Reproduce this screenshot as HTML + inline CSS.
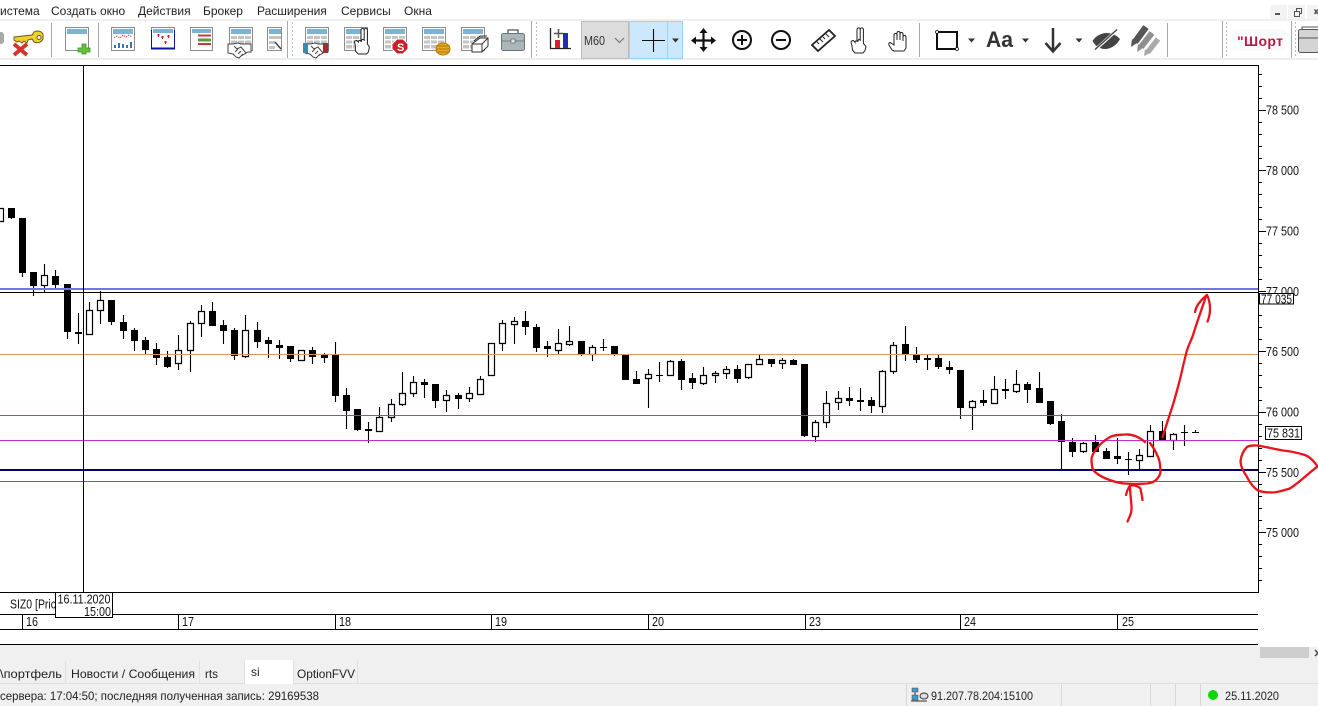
<!DOCTYPE html>
<html><head><meta charset="utf-8"><style>
html,body{margin:0;padding:0;width:1318px;height:706px;overflow:hidden;background:#fff}
svg{position:absolute;left:0;top:0;font-family:"Liberation Sans",sans-serif}
</style></head><body>
<svg width="1318" height="706" viewBox="0 0 1318 706" xmlns="http://www.w3.org/2000/svg">
<defs>
<g id="tb"><rect x=".5" y=".5" width="23" height="23" fill="#fff" stroke="#8c8c8c"/><rect x="2" y="2" width="20" height="5" fill="#7fb3d1"/><path d="M2 9h20v3H2zM2 13.500h20v3H2zM2 18h20v3.500H2z" fill="#c4c4c4"/><path d="M8.500 8v14M15.500 8v14" stroke="#fff"/></g>
<g id="win"><rect x=".5" y=".5" width="23" height="23" fill="#fff" stroke="#8c8c8c"/><rect x="2" y="2" width="20" height="5" fill="#7fb3d1"/></g>
<g id="hs"><path d="M1 2h5l5-1 3 1 3 0 7 0v8h-3l-7 4-2 2-3-1-3-3-5-1z" fill="#fff" stroke="#444"/><path d="M7 4l3 3 4-2 5 6M8 10l3-3M11 12l3-3M14 14l2-2" fill="none" stroke="#444"/></g>
<path id="ar" d="M0 0h7l-3.500 4z" fill="#333"/>
</defs>
<!-- top chrome -->
<rect x="0" y="19" width="1318" height="2" fill="#f0f0f0"/>
<rect x="0" y="58" width="1318" height="2" fill="#eee"/>
<g font-size="12" fill="#222">
<text x="0" y="15">истема</text><text x="51" y="15">Создать окно</text><text x="138" y="15">Действия</text><text x="203" y="15">Брокер</text><text x="257" y="15">Расширения</text><text x="341" y="15">Сервисы</text><text x="404" y="15">Окна</text>
</g>
<!-- window buttons -->
<rect x="1270" y="5" width="17" height="14" fill="#f3f3f3"/><rect x="1288" y="5" width="17" height="14" fill="#f3f3f3"/><rect x="1307" y="5" width="11" height="14" fill="#f3f3f3"/>
<path d="M1275 14h5" stroke="#555" stroke-width="2"/><path d="M1294.500 11.500h5v5h-5zM1296.500 11V8.500h5v5H1300" fill="none" stroke="#555"/><path d="M1314.500 9.500l3.500 4.500M1318 9.500l-3.500 4.500" stroke="#555" stroke-width="1.500"/>
<!-- separators -->
<path d="M51.500 23v34M98.500 23v34M287.500 21v37M531.500 21v37M919.500 23v34M1167.500 23v34M1222.500 21v37M1291.500 21v37" stroke="#a8a8a8"/>
<path d="M292.500 22v36M536.500 22v36M1226.500 22v36M1295.500 22v36" stroke="#bbb" stroke-dasharray="2 2"/>
<!-- key -->
<path d="M0 32h2l2 2v8l-2 2H0z" fill="#a9a9a9"/>
<path d="M14 37l18-2 2-3a6.500 6.500 0 0 1 9 2v5a6.500 6.500 0 0 1-9 3l-2-3-4 1-1 3-3-2-2 2-3-2-2 1-3-2z" fill="#f0d030" stroke="#6b5a10" stroke-width="1"/><circle cx="39" cy="37.500" r="2" fill="#fff" stroke="#6b5a10"/>
<path d="M14 44l13 11M27 44L14 55" stroke="#d8332a" stroke-width="3.800"/>
<!-- new window -->
<use href="#win" x="65" y="27"/><path d="M82 44h4v4h4v4h-4v2h-4v-2h-4v-4h4z" fill="#62c23a" stroke="#3d8f1e" stroke-width=".8"/>
<!-- chart window -->
<use href="#win" x="111" y="27"/><path d="M114 38l3-2 3 2 3-3 3 2 3-2 3 2" fill="none" stroke="#c04040" stroke-dasharray="1.500 1"/><path d="M114 48v-3h2v3zM118 48v-5h2v5zM122 48v-4h2v4zM126 48v-3h2v3zM130 48v-6h2v6z" fill="#3a7aa8"/>
<!-- dots window -->
<rect x="151.500" y="27.500" width="23" height="21" fill="#fff" stroke="#8c8c8c"/><rect x="153" y="29" width="20" height="4" fill="#7fb3d1"/><path d="M151 48.500h24" stroke="#0a1a9a" stroke-width="2"/><path d="M151.500 30v18M174.500 30v18" stroke="#0a1a9a"/><path d="M157 35h3M158.500 34v3M161 37h3M162.500 36v3M167 36h3M168.500 35v3M164 42h3M165.500 41v3" stroke="#d02020"/>
<!-- lines window -->
<rect x="190.500" y="27.500" width="22" height="23" fill="#fff" stroke="#8c8c8c"/><rect x="192" y="29" width="19" height="4" fill="#7fb3d1"/><path d="M198 34.500h13v2h-13z" fill="#c83a3a"/><path d="M198 38.500h13v3h-13z" fill="#5f9a3a"/><path d="M198 43h13v2h-13z" fill="#c83a3a"/>
<!-- table + handshake -->
<use href="#tb" x="229" y="27"/><use href="#hs" x="227" y="42"/>
<rect x="267.500" y="27.500" width="14" height="23" fill="#fff" stroke="#8c8c8c"/><rect x="269" y="29" width="12" height="5" fill="#7fb3d1"/><path d="M269 36h12v3h-12zM269 41h6v3h-6zM269 46h6v3h-6z" fill="#c4c4c4"/><path d="M275 42l6 7" stroke="#444" stroke-width="1.500"/>
<use href="#tb" x="305" y="27"/><use href="#hs" x="304" y="42"/><rect x="303" y="43" width="5" height="10" fill="#3d89ad"/><rect x="323" y="43" width="5" height="10" fill="#a82a2a"/>
<use href="#tb" x="344" y="27"/>
<path d="M361 42V30a1.600 1.600 0 0 1 3.200 0V41M364.200 41V30a1.600 1.600 0 0 1 3.200 0v14l2 3-1 5-2 2h-8l-3-3v-5l-1-4c0-1 2-2 3-1l1 1c0-2 2-2 3-1 0-2 2-2 3-1" fill="#fff" stroke="#222"/>
<use href="#tb" x="383" y="27"/><path d="M397 39h6l5 5v5l-5 5h-6l-5-5v-5z" fill="#c8202a" stroke="#fff"/><text x="397" y="51" font-size="11" font-weight="bold" fill="#fff">S</text>
<use href="#tb" x="422" y="27"/><ellipse cx="443" cy="49" rx="7" ry="6" fill="#e5a81f" stroke="#b47d10"/><path d="M436 46h14M436 49h14M436 52h14" stroke="#b47d10"/>
<use href="#tb" x="461" y="27"/><path d="M472 44l8-6h8v8l-6 6h-10z" fill="#fff" stroke="#333"/><path d="M472 44h10v8M482 44l6-6M474 41l6-5h7" fill="none" stroke="#333"/>
<!-- briefcase -->
<rect x="501.500" y="33.500" width="23" height="17" rx="2" fill="#aab7bb" stroke="#6c7478"/><path d="M508 33v-3h10v3" fill="none" stroke="#555" stroke-width="1.300"/><path d="M502 41h22" stroke="#75807f"/><rect x="511" y="39" width="4" height="4" fill="#e0e6e6" stroke="#555" stroke-width=".6"/>
<!-- chart icon -->
<path d="M550.500 28v20.500H571" fill="none" stroke="#222" stroke-width="1.300"/><path d="M555 40h5v8h-5z" fill="#d81e2a"/><path d="M563 33h5v15h-5z" fill="#1f2fb0"/><path d="M558.500 29v9M554 33.500h9" stroke="#555" stroke-width="1.500"/>
<!-- M60 combo -->
<rect x="581.500" y="21.500" width="47" height="37" fill="#dcdcdc" stroke="#bdbdbd"/>
<text x="584" y="45" font-size="13" fill="#333" textLength="21" lengthAdjust="spacingAndGlyphs">M60</text>
<path d="M615 38l4.500 4.500L624 38" fill="none" stroke="#777" stroke-width="1.200"/>
<rect x="629.500" y="21.500" width="53" height="37" fill="#cce8ff" stroke="#99d1ff"/><path d="M667.500 22v36" stroke="#99d1ff"/>
<path d="M642 40.500h23M653.500 29v23" stroke="#111" stroke-width="1.100"/>
<use href="#ar" x="672" y="38.500"/>
<!-- move -->
<path d="M703.500 31v18M694 40.500h19" stroke="#111" stroke-width="2.200"/><path d="M703.500 28l4 5h-8zM703.500 52l4-5h-8zM691 40.500l5-4v8zM716 40.500l-5-4v8z" fill="#111"/>
<!-- zoom -->
<circle cx="742" cy="40" r="9" fill="none" stroke="#111" stroke-width="2"/><path d="M737 40h10M742 35v10" stroke="#111" stroke-width="2"/>
<circle cx="781" cy="40" r="9" fill="none" stroke="#111" stroke-width="2"/><path d="M776 40h10" stroke="#111" stroke-width="2"/>
<!-- ruler -->
<path d="M812 45l17-15 6 6-17 15z" fill="#fff" stroke="#222" stroke-width="1.800"/><path d="M817 42l2 2M820 39l3 3M823 37l2 2M826 34l3 3" stroke="#222"/>
<!-- two-finger hand -->
<path d="M857 42V29.500a1.600 1.600 0 0 1 3.200 0V41M860.200 41V29.500a1.600 1.600 0 0 1 3.200 0v14l2.600 3-1 4-2 2.500h-8l-2.500-3-.5-4-1-4c0-1 2-2 3-1l1 1.500c0-2 2-2 3-1.500 0-1.500 1.500-2 2.500-1.500" fill="#fff" stroke="#222"/>
<!-- open hand -->
<path d="M892 50l-3-5c-1-2 1-3 2-2l3 2V35a1.200 1.200 0 0 1 3 0v5-7a1.200 1.200 0 0 1 3 0v7-6a1.200 1.200 0 0 1 3 0v7-4a1.200 1.200 0 0 1 3 0v11l-2 3h-10z" fill="#fff" stroke="#222"/>
<!-- rectangle -->
<rect x="937" y="32" width="20" height="17" fill="none" stroke="#111" stroke-width="2"/><circle cx="937" cy="32" r="1.500" fill="#fff" stroke="#111" stroke-width=".8"/><circle cx="957" cy="49" r="1.500" fill="#fff" stroke="#111" stroke-width=".8"/>
<use href="#ar" x="968" y="38.500"/>
<text x="986" y="47" font-size="22" font-weight="bold" fill="#333" textLength="27" lengthAdjust="spacingAndGlyphs">Aa</text>
<use href="#ar" x="1022" y="38.500"/>
<path d="M1053 28v23" stroke="#333" stroke-width="2.500"/><path d="M1045.500 43l7.500 8.500 7.500-8.500" fill="none" stroke="#333" stroke-width="2.500"/>
<use href="#ar" x="1075.500" y="38.500"/>
<!-- eye -->
<path d="M1092.500 41c3-5 9-8 14-8 5 0 10 2 13.500 6-3 6-9 10-15 10-5 0-10-3-12.500-8z" fill="#444"/><path d="M1095 50l23-21" stroke="#fff" stroke-width="3"/><path d="M1095 49.500l22-20" stroke="#444" stroke-width="1.400"/>
<!-- pencils -->
<path d="M1146 27l-11 15" stroke="#555" stroke-width="6.500"/><path d="M1132 39l5 4-6 4z" fill="#555"/>
<path d="M1152 33l-11 14" stroke="#8f8f8f" stroke-width="6"/><path d="M1138 44l5 4-6 4z" fill="#8f8f8f"/>
<path d="M1158 39l-10 13" stroke="#aaa" stroke-width="5.500"/><path d="M1145 49l5 4-6 3z" fill="#aaa"/>
<!-- short -->
<rect x="1233" y="29" width="53" height="22" fill="#fbfbfb"/>
<text x="1237" y="46" font-size="14" font-weight="bold" fill="#b91b42" textLength="46">"Шорт</text>
<!-- right icon -->
<rect x="1298.500" y="29.500" width="20" height="23" rx="2" fill="#d4d4d4" stroke="#555"/><path d="M1302 29v-2h16M1298 38h20" fill="none" stroke="#555"/>

<!-- candle wicks -->
<path stroke="#000" stroke-width="1.100" fill="none" d="M11.500 208V219M22.500 218V277M33.500 272V296M44.500 264V292M55.500 270V288M67.500 284V339M78.500 313V344M89.500 302V335M100.500 291V324M111.500 300V325M123.500 315V339M134.500 328V351M145.500 337V354M156.500 343V365M167.500 351V368M178.500 335V370M190.500 321V372M201.500 305V337M212.500 302V326M223.500 320V344M234.500 328V360M245.500 315V358M257.500 322V348M268.500 337V358M279.500 340V359M290.500 346V362M301.500 350V361M312.500 347V364M324.500 353V363M335.500 342V402M346.500 388V429M357.500 409V431M368.500 422V443M379.500 407V432M391.500 399V422M402.500 372V406M413.500 376V397M424.500 379V398M435.500 384V408M446.500 390V412M458.500 393V409M469.500 387V402M480.500 376V395M502.500 320V351M514.500 317V344M525.500 311V335M536.500 324V352M547.500 341V357M558.500 329V355M569.500 326V346M581.500 341V356M592.500 345V361M603.500 339V351M614.500 346V356M625.500 355V380M636.500 371V384M648.500 369V408M659.500 362V382M670.500 360V376M681.500 359V390M692.500 373V389M703.500 367V385M715.500 371V383M726.500 366V379M737.500 365V383M748.500 364V379M759.500 355V364M771.500 359V367M782.500 358V369M793.500 359V365M804.500 364V437M815.500 420V442M826.500 391V428M838.500 391V410M849.500 387V406M860.500 388V411M871.500 397V413M882.500 370V413M893.500 342V374M905.500 326V361M916.500 347V363M927.500 354V370M938.500 355V369M949.500 361V374M960.500 370V419M972.500 400V430M983.500 390V406M994.500 376V404M1005.500 379V399M1016.500 370V393M1027.500 382V403M1039.500 372V403M1050.500 401V425M1061.500 414V469M1072.500 438V457M1083.500 442V453M1095.500 435V452M1106.500 448V459M1117.500 438V464M1128.500 452V475M1139.500 449V470M1150.500 425V456M1162.500 421V440M1173.500 433V450M1184.500 425V446M1195.500 430V433"/>
<!-- black bodies -->
<path fill="#000" d="M8 208h7V218h-7zM19 218h7V273h-7zM30 272h7V286h-7zM52 276h7V285h-7zM64 284h7V332h-7zM75 332h7V334h-7zM108 300h7V322h-7zM120 322h7V331h-7zM131 330h7V341h-7zM142 340h7V350h-7zM153 349h7V358h-7zM164 357h7V367h-7zM209 311h7V326h-7zM220 325h7V331h-7zM231 330h7V356h-7zM254 330h7V342h-7zM265 340h7V344h-7zM276 345h7V348h-7zM287 346h7V359h-7zM309 350h7V357h-7zM321 355h7V358h-7zM332 355h7V396h-7zM343 395h7V411h-7zM354 409h7V430h-7zM365 429h7V431h-7zM421 382h7V385h-7zM432 384h7V401h-7zM455 395h7V399h-7zM522 321h7V327h-7zM533 327h7V348h-7zM544 346h7V349h-7zM578 341h7V355h-7zM600 347h7V348h-7zM611 346h7V355h-7zM622 355h7V380h-7zM633 379h7V384h-7zM656 375h7V376h-7zM678 361h7V380h-7zM689 378h7V383h-7zM734 369h7V379h-7zM768 359h7V364h-7zM790 360h7V365h-7zM801 364h7V436h-7zM846 398h7V401h-7zM857 400h7V402h-7zM868 400h7V406h-7zM902 344h7V354h-7zM913 355h7V360h-7zM924 358h7V360h-7zM935 358h7V367h-7zM946 367h7V370h-7zM957 370h7V408h-7zM980 400h7V403h-7zM1002 389h7V391h-7zM1024 384h7V390h-7zM1036 388h7V403h-7zM1047 401h7V424h-7zM1058 421h7V442h-7zM1069 442h7V452h-7zM1092 442h7V452h-7zM1103 451h7V459h-7zM1114 456h7V459h-7zM1125 459h7V460h-7zM1159 431h7V440h-7zM1181 432h7V433h-7zM1192 432h7V433h-7z"/>
<!-- hollow bodies -->
<path fill="#fff" stroke="#000" stroke-width="1.200" d="M-2.500 208.500h6V221.500h-6zM41.500 275.500h6V285.500h-6zM86.500 310.500h6V334.500h-6zM97.500 300.500h6V310.500h-6zM175.500 350.500h6V363.500h-6zM187.500 323.500h6V350.500h-6zM198.500 311.500h6V323.500h-6zM242.500 330.500h6V356.500h-6zM298.500 350.500h6V360.500h-6zM376.500 417.500h6V431.500h-6zM388.500 404.500h6V417.500h-6zM399.500 393.500h6V404.500h-6zM410.500 382.500h6V393.500h-6zM443.500 395.500h6V400.500h-6zM466.500 393.500h6V398.500h-6zM477.500 379.500h6V394.500h-6zM488.500 343.500h6V375.500h-6zM499.500 323.500h6V343.500h-6zM511.500 321.500h6V324.500h-6zM555.500 343.500h6V350.500h-6zM566.500 341.500h6V344.500h-6zM589.500 347.500h6V354.500h-6zM645.500 374.500h6V378.500h-6zM667.500 361.500h6V375.500h-6zM700.500 375.500h6V383.500h-6zM712.500 373.500h6V375.500h-6zM723.500 369.500h6V373.500h-6zM745.500 364.500h6V377.500h-6zM756.500 359.500h6V364.500h-6zM779.500 360.500h6V363.500h-6zM812.500 422.500h6V436.500h-6zM823.500 403.500h6V422.500h-6zM835.500 398.500h6V402.500h-6zM879.500 371.500h6V406.500h-6zM890.500 345.500h6V371.500h-6zM969.500 401.500h6V407.500h-6zM991.500 389.500h6V403.500h-6zM1013.500 384.500h6V391.500h-6zM1080.500 443.500h6V451.500h-6zM1136.500 455.500h6V460.500h-6zM1147.500 431.500h6V456.500h-6zM1170.500 434.500h6V440.500h-6z"/>
<!-- horizontal levels -->
<rect x="0" y="288" width="1258" height="2" fill="#7474e8"/>
<rect x="0" y="292" width="1258" height="1" fill="#000"/>
<rect x="0" y="354" width="1258" height="1" fill="#ea8f55"/>
<rect x="0" y="415" width="1258" height="1" fill="#c02cd4"/>
<rect x="0" y="440" width="1258" height="1" fill="#c02cd4"/>
<rect x="0" y="469" width="1258" height="2" fill="#000070"/>
<rect x="0" y="481" width="1258" height="1" fill="#c02cd4"/>
<!-- crosshair -->
<rect x="83" y="66" width="1" height="527" fill="#000"/>
<!-- frame -->
<rect x="0" y="65" width="1258" height="1" fill="#000"/>
<rect x="1258" y="65" width="1" height="528" fill="#000"/>
<rect x="0" y="592" width="1259" height="1" fill="#000"/>
<rect x="0" y="614" width="1258" height="1" fill="#000"/>
<rect x="0" y="629" width="1258" height="1" fill="#000"/>
<rect x="0" y="644" width="1258" height="1" fill="#000"/>
<!-- y axis ticks -->
<path stroke="#000" d="M1258 110.500h8M1258 170.500h8M1258 231.500h8M1258 291.500h8M1258 351.500h8M1258 412.500h8M1258 472.500h8M1258 532.500h8M1258 74.500h4M1258 86.500h4M1258 98.500h4M1258 122.500h4M1258 134.500h4M1258 146.500h4M1258 158.500h4M1258 182.500h4M1258 194.500h4M1258 207.500h4M1258 219.500h4M1258 243.500h4M1258 255.500h4M1258 267.500h4M1258 279.500h4M1258 303.500h4M1258 315.500h4M1258 327.500h4M1258 339.500h4M1258 363.500h4M1258 375.500h4M1258 387.500h4M1258 400.500h4M1258 424.500h4M1258 436.500h4M1258 448.500h4M1258 460.500h4M1258 484.500h4M1258 496.500h4M1258 508.500h4M1258 520.500h4M1258 544.500h4M1258 556.500h4M1258 568.500h4M1258 580.500h4"/>
<g font-size="13" fill="#111">
<text x="1266" y="114.500" textLength="33" lengthAdjust="spacingAndGlyphs">78 500</text>
<text x="1266" y="175" textLength="33" lengthAdjust="spacingAndGlyphs">78 000</text>
<text x="1266" y="235.500" textLength="33" lengthAdjust="spacingAndGlyphs">77 500</text>
<text x="1266" y="296" textLength="33" lengthAdjust="spacingAndGlyphs">77 000</text>
<text x="1266" y="356" textLength="33" lengthAdjust="spacingAndGlyphs">76 500</text>
<text x="1266" y="416.500" textLength="33" lengthAdjust="spacingAndGlyphs">76 000</text>
<text x="1266" y="477" textLength="33" lengthAdjust="spacingAndGlyphs">75 500</text>
<text x="1266" y="537" textLength="33" lengthAdjust="spacingAndGlyphs">75 000</text>
</g>
<rect x="1259.500" y="293.500" width="34" height="10.500" fill="#fff" stroke="#000"/>
<text x="1261" y="303.500" font-size="13" fill="#111" textLength="31" lengthAdjust="spacingAndGlyphs">77 035</text>
<rect x="1265.500" y="426.500" width="36" height="13" fill="#fff" stroke="#000"/>
<text x="1267" y="437.500" font-size="13" fill="#111" textLength="33" lengthAdjust="spacingAndGlyphs">75 831</text>
<!-- red annotations -->
<g fill="none" stroke="#e8141c" stroke-width="2.300" stroke-linejoin="round" stroke-linecap="round">
<path d="M1145 442C1138 436 1132 434 1125 434.500C1118 435 1113 435 1110 437C1105 440 1101 443 1098 447C1094 452 1091 456 1091.500 461C1092 466 1092 469 1094 471C1098 475 1102 477 1107 479C1112 481 1118 483 1124 483.500C1132 484 1140 484 1147 483.500C1151 483 1154 482 1156 480C1159 477 1161 474 1160.500 470C1160 465 1160 461 1158 457C1156 452 1153 447 1150 443"/>
<path d="M1127.500 521.500C1130 516 1132 512 1131.500 506C1131 499 1130 492 1130 485.500M1126 495C1127 491 1129 487 1130 485.500C1134 485 1138 486 1140.500 488.500C1141 492 1142 496 1142.500 500"/>
<path d="M1162.500 437C1166 426 1170 414 1173.500 403C1176 394 1179 384 1181.500 373C1183 366 1185 358 1186.500 352C1188 346 1191 341 1193 335C1197 322 1202 308 1206.500 295"/>
<path d="M1195 312C1196 307 1198 304 1200 302C1202 299 1205 297 1207 295C1209 299 1210 304 1210 308.500C1210 313 1209 318 1207.500 321.500"/>
<path d="M1258 445.500C1254 445.500 1250 445 1247 447C1243 451 1241 456 1240.500 461.500C1241 468 1244 472 1247 477C1250 483 1254 488 1258 490.500C1263 492.500 1268 492.500 1273 492.500C1279 492 1284 490 1290 488.500C1295 485 1299 482 1303.500 478C1308 474 1313 470 1317.500 466.500C1314 461 1310 457 1305 455C1298 453 1291 451 1283 450.500C1274 449 1266 447 1258 445.500"/>
</g>
<!-- time axis labels -->
<g font-size="13" fill="#111">
<text x="10" y="608.500" textLength="46" lengthAdjust="spacingAndGlyphs">SIZ0 [Pric</text>
<path d="M22.500 615v14M178.500 615v14M335.500 615v14M491.500 615v14M648.500 615v14M805.500 615v14M960.500 615v14M1117.500 615v14" stroke="#000"/>
<text x="26" y="626" textLength="12" lengthAdjust="spacingAndGlyphs">16</text>
<text x="182" y="626" textLength="12" lengthAdjust="spacingAndGlyphs">17</text>
<text x="339" y="626" textLength="12" lengthAdjust="spacingAndGlyphs">18</text>
<text x="495" y="626" textLength="12" lengthAdjust="spacingAndGlyphs">19</text>
<text x="652" y="626" textLength="12" lengthAdjust="spacingAndGlyphs">20</text>
<text x="809" y="626" textLength="12" lengthAdjust="spacingAndGlyphs">23</text>
<text x="964" y="626" textLength="12" lengthAdjust="spacingAndGlyphs">24</text>
<text x="1122" y="626" textLength="12" lengthAdjust="spacingAndGlyphs">25</text>
</g>
<rect x="55.500" y="592.500" width="57" height="25" fill="#fff" stroke="#000"/>
<text x="57.500" y="603.500" font-size="13" fill="#111" textLength="53" lengthAdjust="spacingAndGlyphs">16.11.2020</text>
<text x="111" y="616" font-size="13" fill="#111" text-anchor="end" textLength="27" lengthAdjust="spacingAndGlyphs">15:00</text>
<!-- bottom area -->
<rect x="0" y="645" width="1258" height="61" fill="#f0f0f0"/>
<rect x="1258" y="647" width="60" height="59" fill="#f0f0f0"/>
<rect x="1260" y="647" width="49" height="11" fill="#cdcdcd"/>
<path d="M1315 650l3 3-3 3" fill="none" stroke="#444" stroke-width="1.500"/>
<path d="M0 683.500h1318" stroke="#dedede"/>
<path d="M65.500 661v22M199.500 661v22M293.500 661v22M357.500 661v22M244.500 661v22" stroke="#e0e0e0"/>
<rect x="245" y="660" width="48" height="24" fill="#fff"/>
<g font-size="12" fill="#222">
<text x="0" y="678" textLength="62" lengthAdjust="spacingAndGlyphs">\портфель</text>
<text x="71" y="678" textLength="124" lengthAdjust="spacingAndGlyphs">Новости / Сообщения</text>
<text x="205" y="678" textLength="13" lengthAdjust="spacingAndGlyphs">rts</text>
<text x="251" y="676">si</text>
<text x="297" y="678" textLength="58" lengthAdjust="spacingAndGlyphs">OptionFVV</text>
<text x="0" y="700" textLength="319" lengthAdjust="spacingAndGlyphs">сервера: 17:04:50; последняя полученная запись: 29169538</text>
<text x="931" y="700" textLength="102" lengthAdjust="spacingAndGlyphs">91.207.78.204:15100</text>
<text x="1225" y="700" textLength="54" lengthAdjust="spacingAndGlyphs">25.11.2020</text>
</g>
<path d="M906.500 684v22M1061.500 684v22M1150.500 684v22M1175.500 684v22M1200.500 684v22" stroke="#d8d8d8"/>
<rect x="912" y="688" width="6" height="4" fill="#3d9fc9" stroke="#444" stroke-width=".5"/><rect x="912" y="695" width="6" height="5" fill="#3d9fc9" stroke="#444" stroke-width=".5"/><path d="M915 692v3M911 701h16" stroke="#333"/><ellipse cx="924" cy="696" rx="4" ry="3" fill="#ddd" stroke="#333"/>
<circle cx="1213" cy="695" r="5" fill="#0ed60e"/>
</svg>
</body></html>
